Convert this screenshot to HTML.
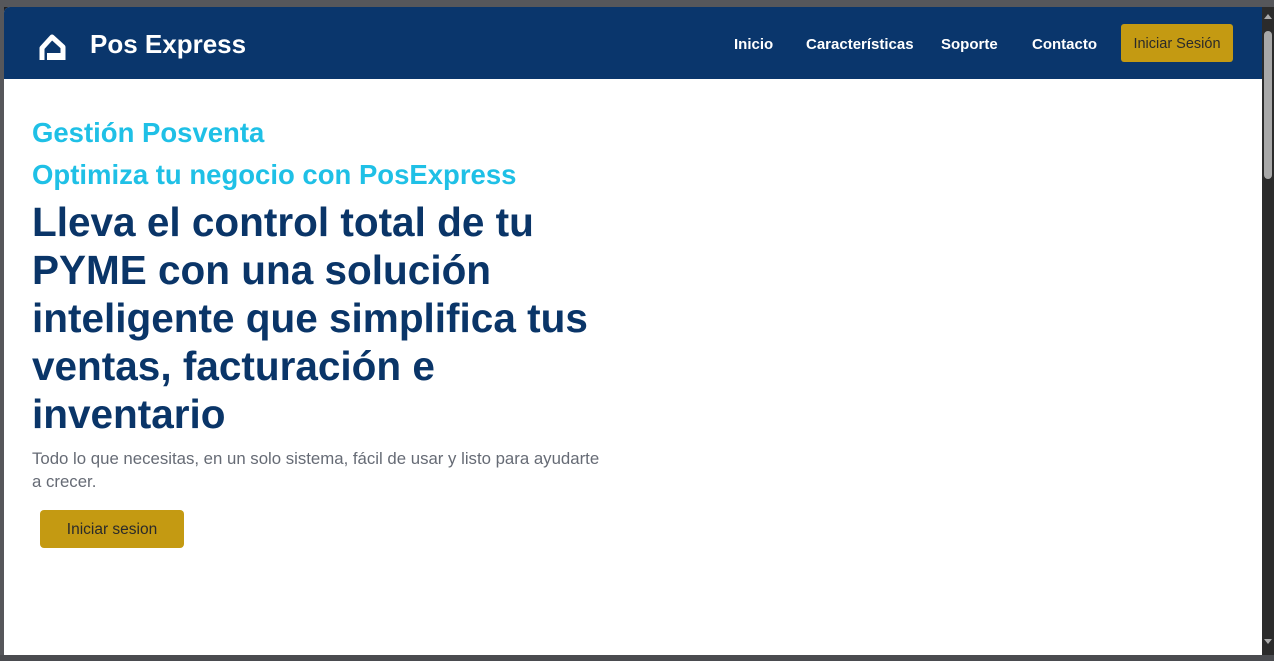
<!DOCTYPE html>
<html><head><meta charset="utf-8"><style>
*{margin:0;padding:0;box-sizing:border-box}
body{width:1274px;height:661px;background:#1e1f22;position:relative;overflow:hidden;font-family:"Liberation Sans",sans-serif}
.top{position:absolute;left:0;top:0;width:1274px;height:7px;background:#56575b}
.bot{position:absolute;left:0;top:655px;width:1274px;height:6px;background:#4a4b4f}
.left{position:absolute;left:0;top:0;width:4px;height:661px;background:#56575b}
.page{position:absolute;left:4px;top:7px;width:1258px;height:648px;background:#fff;border-top-left-radius:6px;overflow:hidden}
.nav{height:72px;background:#0a366c;position:relative}
.brand{position:absolute;left:86px;top:22px;color:#fff;font-weight:bold;font-size:26px}
.nav a{position:absolute;top:29px;color:#fff;font-weight:bold;font-size:15px;text-decoration:none}
.nbtn{position:absolute;left:1117px;top:17px;width:112px;height:38px;background:#c49a12;border-radius:3px;color:#2a2a2a;font-size:14.5px;text-align:center;line-height:40px}
.sb{position:absolute;left:1262px;top:7px;width:12px;height:648px;background:#2b2b2b}
.thumb{position:absolute;left:2px;top:24px;width:8px;height:148px;background:#a8a8a8;border-radius:4px}
h2{position:absolute;left:28px;color:#1fc0e6;font-weight:bold;font-size:27.5px;white-space:nowrap}
h1{position:absolute;left:28px;top:191px;color:#0a3568;font-weight:bold;font-size:40.5px;line-height:48px;white-space:nowrap}
p{position:absolute;left:28px;top:440px;color:#666b75;font-size:16.8px;line-height:23px;white-space:nowrap}
.btn{position:absolute;left:36px;top:503px;width:144px;height:38px;background:#c49a12;border-radius:4px;color:#2a2a2a;font-size:15.5px;text-align:center;line-height:40px}
</style></head><body>
<div class="top"></div><div class="left"></div><div class="bot"></div>
<div class="page">
 <div class="nav">
  <svg style="position:absolute;left:32px;top:24px" width="34" height="32" viewBox="0 0 34 32">
   <path d="M6 29 V17 L16 6 L27 16 V29" fill="none" stroke="#fff" stroke-width="5" stroke-linejoin="round"/>
   <rect x="11" y="22" width="16" height="7" fill="#fff"/>
  </svg>
  <div class="brand">Pos Express</div>
  <a style="left:730px">Inicio</a>
  <a style="left:802px">Características</a>
  <a style="left:937px">Soporte</a>
  <a style="left:1028px">Contacto</a>
  <div class="nbtn">Iniciar Sesión</div>
 </div>
 <h2 style="top:110px">Gestión Posventa</h2>
 <h2 style="top:152px">Optimiza tu negocio con PosExpress</h2>
 <h1>Lleva el control total de tu<br>PYME con una solución<br>inteligente que simplifica tus<br>ventas, facturación e<br>inventario</h1>
 <p>Todo lo que necesitas, en un solo sistema, fácil de usar y listo para ayudarte<br>a crecer.</p>
 <div class="btn">Iniciar sesion</div>
</div>
<div class="sb"><div class="thumb"></div>
<svg style="position:absolute;left:2px;top:6px" width="8" height="6"><path d="M0 6 L4 1 L8 6Z" fill="#aaa"/></svg>
<svg style="position:absolute;left:2px;top:632px" width="8" height="6"><path d="M0 0 L4 5 L8 0Z" fill="#aaa"/></svg>
</div>
</body></html>
